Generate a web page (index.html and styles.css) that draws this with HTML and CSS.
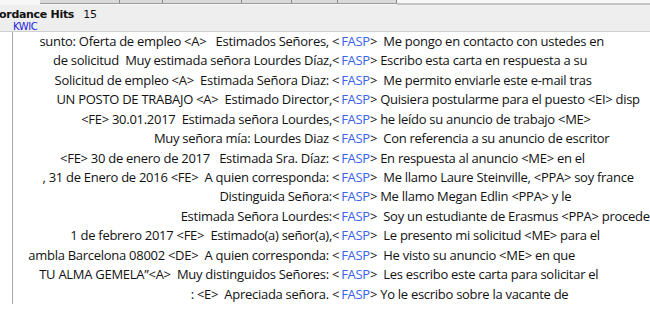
FILE: index.html
```html
<!DOCTYPE html>
<html lang="es">
<head>
    <meta charset="UTF-8">
    <title>Concordance Hits</title>
    <link rel="stylesheet" href="styles.css">
</head>
<body>
    <div class="topbar">
        <div class="colheads">
            <span class="colhead w80"></span>
            <span class="colhead w43"></span>
            <span class="colhead w79"></span>
            <span class="colhead w50"></span>
            <span class="colhead w46"></span>
            <span class="colhead w59"></span>
        </div>
        <div class="rule"></div>
    </div>

    <div class="header">
        <div class="title"><b>ordance Hits</b> <span class="count">15</span></div>
        <div class="tab">KWIC</div>
    </div>

    <div class="pane">
        <div class="kwic">
            <div class="left">sunto: Oferta de empleo &lt;A&gt;   Estimados Señores, </div>
            <div class="right">&lt;<span class="node">FASP</span>&gt;  Me pongo en contacto con ustedes en</div>

            <div class="left">de solicitud  Muy estimada señora Lourdes Díaz,</div>
            <div class="right">&lt;<span class="node">FASP</span>&gt; Escribo esta carta en respuesta a su</div>

            <div class="left">Solicitud de empleo &lt;A&gt;  Estimada Señora Diaz: </div>
            <div class="right">&lt;<span class="node">FASP</span>&gt;  Me permito enviarle este e-mail tras</div>

            <div class="left">UN POSTO DE TRABAJO &lt;A&gt;  Estimado Director,</div>
            <div class="right">&lt;<span class="node">FASP</span>&gt; Quisiera postularme para el puesto &lt;EI&gt; disp</div>

            <div class="left">&lt;FE&gt; 30.01.2017  Estimada señora Lourdes,</div>
            <div class="right">&lt;<span class="node">FASP</span>&gt; he leído su anuncio de trabajo &lt;ME&gt;</div>

            <div class="left">Muy señora mía: Lourdes Diaz </div>
            <div class="right">&lt;<span class="node">FASP</span>&gt;  Con referencia a su anuncio de escritor</div>

            <div class="left">&lt;FE&gt; 30 de enero de 2017   Estimada Sra. Díaz: </div>
            <div class="right">&lt;<span class="node">FASP</span>&gt; En respuesta al anuncio &lt;ME&gt; en el</div>

            <div class="left">, 31 de Enero de 2016 &lt;FE&gt;  A quien corresponda: </div>
            <div class="right">&lt;<span class="node">FASP</span>&gt;  Me llamo Laure Steinville, &lt;PPA&gt; soy france</div>

            <div class="left">Distinguida Señora:</div>
            <div class="right">&lt;<span class="node">FASP</span>&gt; Me llamo Megan Edlin &lt;PPA&gt; y le</div>

            <div class="left">Estimada Señora Lourdes:</div>
            <div class="right">&lt;<span class="node">FASP</span>&gt;  Soy un estudiante de Erasmus &lt;PPA&gt; proceder</div>

            <div class="left">1 de febrero 2017 &lt;FE&gt;  Estimado(a) señor(a),</div>
            <div class="right">&lt;<span class="node">FASP</span>&gt;  Le presento mi solicitud &lt;ME&gt; para el</div>

            <div class="left">ambla Barcelona 08002 &lt;DE&gt;  A quien corresponda: </div>
            <div class="right">&lt;<span class="node">FASP</span>&gt;  He visto su anuncio &lt;ME&gt; en que</div>

            <div class="left">TU ALMA GEMELA”&lt;A&gt;  Muy distinguidos Señores: </div>
            <div class="right">&lt;<span class="node">FASP</span>&gt;  Les escribo este carta para solicitar el</div>

            <div class="left">: &lt;E&gt;  Apreciada señora. </div>
            <div class="right">&lt;<span class="node">FASP</span>&gt; Yo le escribo sobre la vacante de</div>
        </div>
    </div>
</body>
</html>
```

FILE: styles.css
```css
* {
    margin: 0;
    padding: 0;
    box-sizing: border-box;
}

body {
    font-family: 'Open Sans', 'Noto Sans', sans-serif;
    background: #fff;
    color: #111;
    width: 650px;
    overflow: hidden;
}

/* strip of column headers cut off at the top */
.topbar {
    display: flex;
    height: 5px;
    background: #f7f7f7;
}

.colheads {
    display: flex;
    margin-left: 40px;
    height: 4px;
    background: #d9d9d9;
    border-bottom: 1px solid #9c9c9c;
}

.colhead {
    height: 100%;
    border-right: 1px solid #8a8a8a;
}

.w80 { width: 80px; }
.w43 { width: 43px; }
.w79 { width: 79px; }
.w50 { width: 50px; }
.w46 { width: 46px; }
.w59 { width: 59px; }

.rule {
    flex: 1;
    height: 5px;
    border-bottom: 2px solid #c4c4c4;
}

.header {
    height: 27px;
    background: #eeeeee;
    font-family: 'DejaVu Sans', sans-serif;
    border-bottom: 1px solid #cfcfcf;
}

.title {
    font-size: 11px;
    line-height: 13px;
    padding-top: 3px;
    margin-left: -1px;
    letter-spacing: -0.3px;
}

.count {
    margin-left: 6px;
}

.tab {
    font-size: 10px;
    line-height: 12px;
    margin-left: 13px;
    color: #2222dd;
    letter-spacing: -0.4px;
}

.pane {
    height: 295px;
}

.kwic {
    display: grid;
    grid-template-columns: 319px 1fr;
    margin-left: 12px;
    height: 272px;
    border-left: 1px solid #a8a8a8;
    font-size: 13px;
    line-height: 19.8px;
    letter-spacing: -0.28px;
    overflow: hidden;
}

.left,
.right {
    white-space: pre;
    overflow: hidden;
}

.left {
    text-align: right;
    direction: rtl;
    unicode-bidi: plaintext;
}

.node {
    color: #3a62ea;
    margin-left: 2px;
}
```
